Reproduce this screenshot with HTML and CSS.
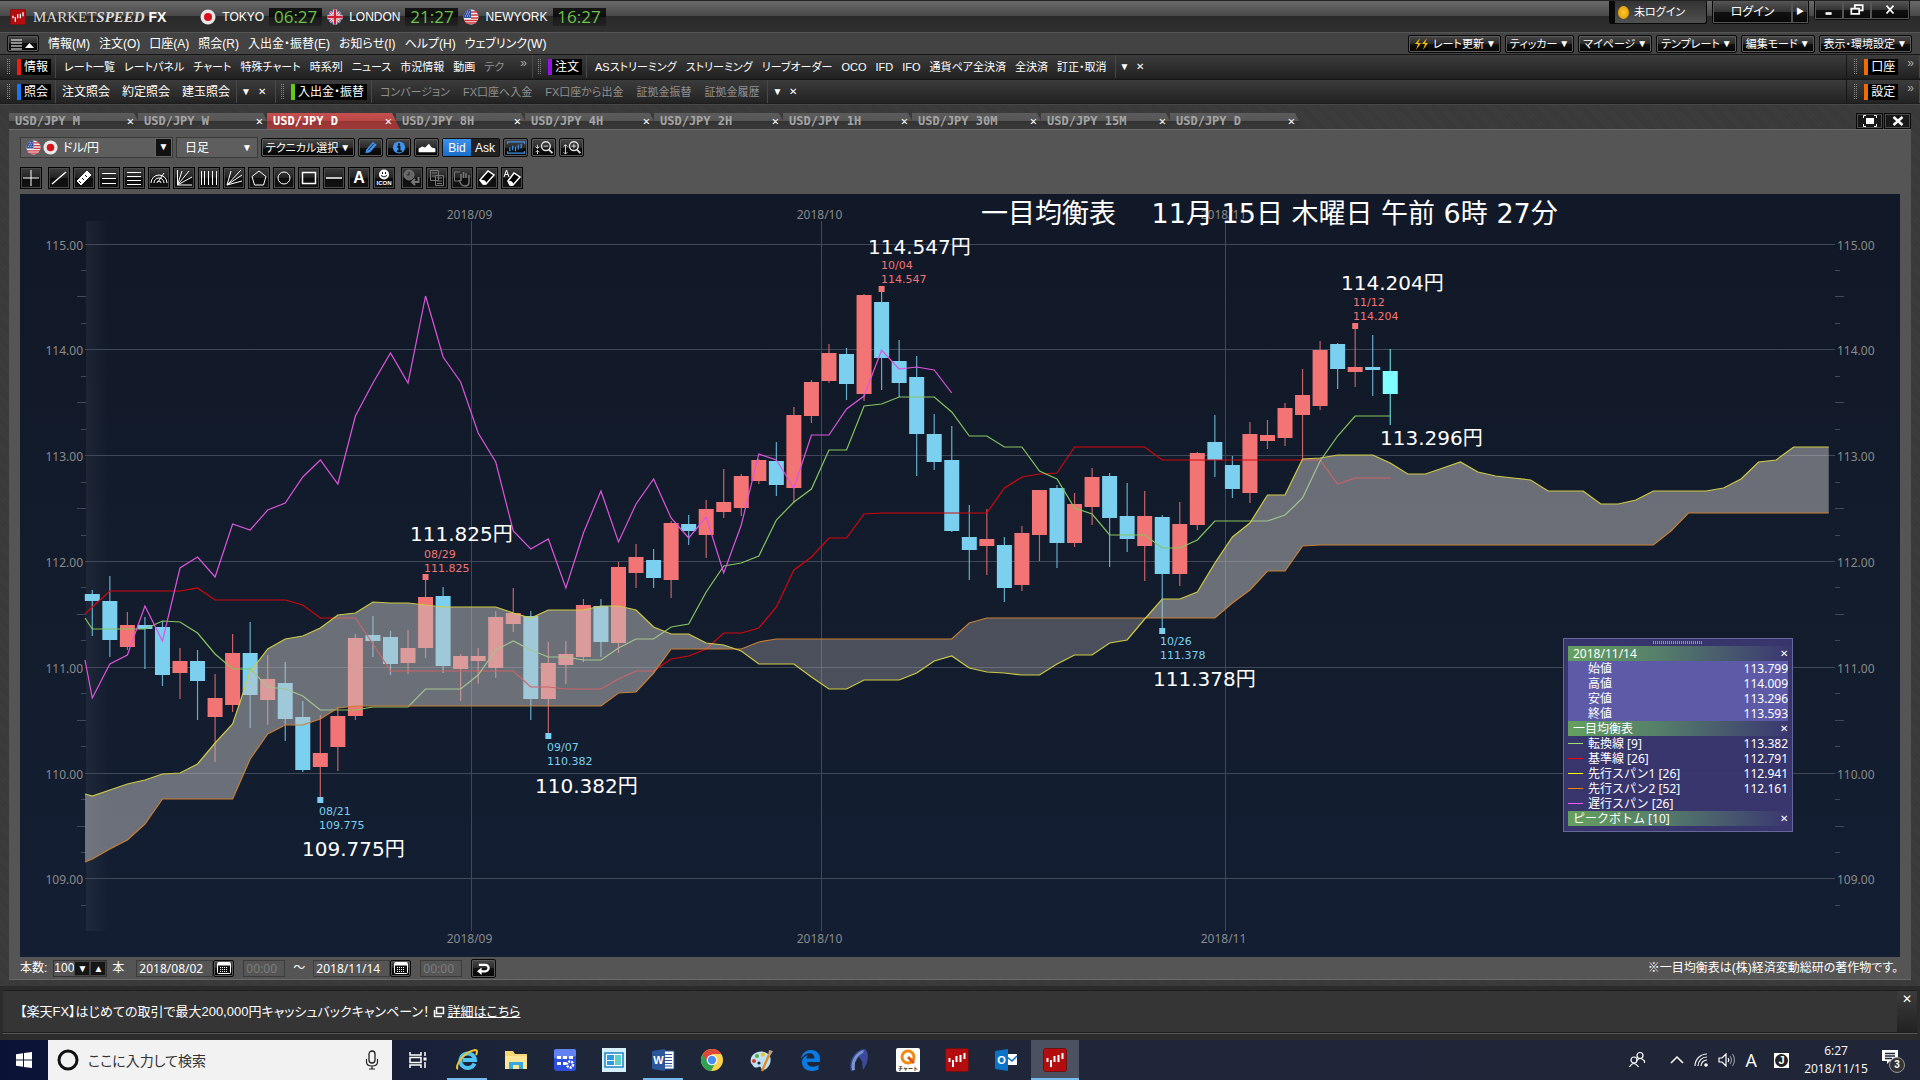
FILE: index.html
```html
<!DOCTYPE html>
<html lang="ja">
<head>
    <meta charset="UTF-8">
    <title>MARKETSPEED FX</title>
    <link rel="stylesheet" href="styles.css">
</head>
<body>
    <svg class="defs" aria-hidden="true">
        <symbol id="flag-jp" viewBox="0 0 16 16"><circle cx="8" cy="8" r="7.5" fill="#e8e8e8"/><circle cx="8" cy="8" r="4" fill="#d8101c"/></symbol>
        <symbol id="flag-uk" viewBox="0 0 16 16"><circle cx="8" cy="8" r="7.5" fill="#2b4394"/><path d="M3 3l10 10M13 3L3 13" stroke="#eee" stroke-width="2.6"/><path d="M3 3l10 10M13 3L3 13" stroke="#d33" stroke-width="1"/><path d="M8 .5v15M.5 8h15" stroke="#eee" stroke-width="4.4"/><path d="M8 .5v15M.5 8h15" stroke="#cf1f30" stroke-width="2.4"/></symbol>
        <symbol id="flag-us" viewBox="0 0 16 16"><circle cx="8" cy="8" r="7.5" fill="#eee"/><path d="M8 3h6M8 6h7.3M8 9h7.5M1 11.5h14M3 14h10" stroke="#d0353f" stroke-width="1.4"/><path d="M8 .5A7.5 7.5 0 0 0 .5 9H8z" fill="#33509c"/><path d="M3 5h4M4 3h3M2 7h5" stroke="#cdd6f0" stroke-dasharray="1 1"/></symbol>
        <symbol id="logo" viewBox="0 0 24 24"><rect x=".5" y=".5" width="23" height="23" rx="2" fill="#b30d10" stroke="#6d1212"/><path d="M4.5 10v4M8 12v7M11.500 8v6M15.500 7v7M19.500 5v6" stroke="#fff" stroke-width="2"/></symbol>
        <symbol id="cal" viewBox="0 0 14 12"><rect x=".5" y=".5" width="13" height="11" rx="1" fill="#111" stroke="#fff"/><path d="M1 2h12" stroke="#fff" stroke-width="3"/><path d="M3 5.500h8M3 7.500h8M3 9.500h8" stroke="#fff" stroke-dasharray="1 1"/></symbol>
    </svg>

    <header class="titlebar">
        <svg class="app-logo"><use href="#logo"/></svg>
        <h1 class="brand">MARKET<i>SPEED</i> <b>FX</b></h1>
        <div class="clock"><svg><use href="#flag-jp"/></svg>TOKYO <time>06:27</time></div>
        <div class="clock"><svg><use href="#flag-uk"/></svg>LONDON <time>21:27</time></div>
        <div class="clock"><svg><use href="#flag-us"/></svg>NEWYORK <time>16:27</time></div>
        <div class="title-right">
            <div class="login-state"><span class="lamp"></span>未ログイン</div>
            <div class="login"><button>ログイン</button><button class="arrow">▶</button></div>
            <div class="window-buttons">
                <button aria-label="最小化"><svg viewBox="0 0 16 16"><path d="M4 12h7" stroke="#fff" stroke-width="3"/></svg></button>
                <button aria-label="元に戻す"><svg viewBox="0 0 16 16"><path d="M5.500 6V2.500h9v6H11M1.500 6.500h9v6h-9z" fill="none" stroke="#fff" stroke-width="2"/></svg></button>
                <button class="close" aria-label="閉じる"><svg viewBox="0 0 16 16"><path d="M4 3l8 9M12 3l-8 9" stroke="#fff" stroke-width="2"/></svg></button>
            </div>
        </div>
    </header>

    <nav class="menubar">
        <button class="btn menu-toggle" aria-label="メニュー"><svg viewBox="0 0 26 12"><path d="M1 2h11M1 5h11M1 8h11M1 11h11" stroke="#fff"/><path d="M15 10l4.500-5 4.500 5z" fill="#fff"/></svg></button>
        <button>情報(M)</button>
        <button>注文(O)</button>
        <button>口座(A)</button>
        <button>照会(R)</button>
        <button>入出金・振替(E)</button>
        <button>お知らせ(I)</button>
        <button>ヘルプ(H)</button>
        <button>ウェブリンク(W)</button>
        <div class="menu-right">
            <button class="btn"><svg class="bolt" viewBox="0 0 16 14"><path d="M7 1L2 7h3l-2 6 5-7H5zM14 1L9 7h3l-2 6 5-7h-3z" fill="#f5b90b"/></svg>レート更新<span>▼</span></button>
            <button class="btn">ティッカー<span>▼</span></button>
            <button class="btn">マイページ<span>▼</span></button>
            <button class="btn">テンプレート<span>▼</span></button>
            <button class="btn">編集モード<span>▼</span></button>
            <button class="btn">表示・環境設定<span>▼</span></button>
        </div>
    </nav>

    <nav class="toolbar">
        <div class="group info">
            <span class="grip"></span><b class="tag red">情報</b>
            <div class="links">
                <button>レート一覧</button><button>レートパネル</button><button>チャート</button><button>特殊チャート</button><button>時系列</button><button>ニュース</button><button>市況情報</button><button>動画</button><button class="off">テク</button>
            </div>
            <span class="more">»</span>
        </div>
        <div class="group orders">
            <span class="grip"></span><b class="tag purple">注文</b>
            <div class="links">
                <button>ASストリーミング</button><button>ストリーミング</button><button>リーブオーダー</button><button>OCO</button><button>IFD</button><button>IFO</button><button>通貨ペア全決済</button><button>全決済</button><button>訂正・取消</button>
            </div>
            <div class="ends"><button aria-label="一覧">▼</button><button aria-label="閉じる">✕</button></div>
        </div>
        <div class="group last">
            <span class="grip"></span><b class="tag orange">口座</b><span class="more">»</span>
        </div>
    </nav>

    <nav class="toolbar">
        <div class="group inquiry">
            <span class="grip"></span><b class="tag blue">照会</b>
            <div class="links">
                <button>注文照会</button><button>約定照会</button><button>建玉照会</button>
            </div>
            <div class="ends"><button aria-label="一覧">▼</button><button aria-label="閉じる">✕</button></div>
        </div>
        <div class="group transfer">
            <span class="grip"></span><b class="tag green">入出金・振替</b>
            <div class="links">
                <button class="off">コンバージョン</button><button class="off">FX口座へ入金</button><button class="off">FX口座から出金</button><button class="off">証拠金振替</button><button class="off">証拠金履歴</button>
            </div>
            <div class="ends"><button aria-label="一覧">▼</button><button aria-label="閉じる">✕</button></div>
        </div>
        <div class="group last">
            <span class="grip"></span><b class="tag orange">設定</b><span class="more">»</span>
        </div>
    </nav>

    <main class="workspace">
        <div class="tabs">
            <div class="tab"><button>USD/JPY M</button><button class="x" aria-label="閉じる">✕</button></div>
            <div class="tab"><button>USD/JPY W</button><button class="x" aria-label="閉じる">✕</button></div>
            <div class="tab active"><button>USD/JPY D</button><button class="x" aria-label="閉じる">✕</button></div>
            <div class="tab"><button>USD/JPY 8H</button><button class="x" aria-label="閉じる">✕</button></div>
            <div class="tab"><button>USD/JPY 4H</button><button class="x" aria-label="閉じる">✕</button></div>
            <div class="tab"><button>USD/JPY 2H</button><button class="x" aria-label="閉じる">✕</button></div>
            <div class="tab"><button>USD/JPY 1H</button><button class="x" aria-label="閉じる">✕</button></div>
            <div class="tab"><button>USD/JPY 30M</button><button class="x" aria-label="閉じる">✕</button></div>
            <div class="tab"><button>USD/JPY 15M</button><button class="x" aria-label="閉じる">✕</button></div>
            <div class="tab"><button>USD/JPY D</button><button class="x" aria-label="閉じる">✕</button></div>
            <div class="tab-tools">
                <button aria-label="最大化"><svg viewBox="0 0 16 14"><path d="M1.500 4V1.500H4M12 1.500h2.500V4M14.500 10v2.500H12M4 12.500H1.500V10" fill="none" stroke="#fff"/><path d="M4 4h8v6H4z" fill="#fff"/></svg></button>
                <button aria-label="閉じる"><svg viewBox="0 0 16 14"><path d="M3.500 3l9 8M12.500 3l-9 8" stroke="#fff" stroke-width="2.4"/></svg></button>
            </div>
        </div>

        <section class="panel">
            <div class="controls">
                <div class="pair">
                    <svg><use href="#flag-us"/></svg><svg><use href="#flag-jp"/></svg>
                    <select aria-label="通貨ペア"><option>ドル/円</option></select>
                    <span class="drop">▼</span>
                </div>
                <div class="term"><select aria-label="足種"><option>日足</option></select><span>▼</span></div>
                <button class="btn technical">テクニカル選択<span>▼</span></button>
                <button class="btn icon" aria-label="描画"><svg viewBox="0 0 16 16"><path d="M2 14l1-4 7-8 4 3-7 8z" fill="#3f93ec"/><path d="M5 11l6-7" stroke="#123"/></svg></button>
                <button class="btn icon" aria-label="情報"><svg viewBox="0 0 16 16"><circle cx="8" cy="8" r="6.500" fill="#3f93ec"/><path d="M8 3.500v2M6 7h2.500v5M6 12h5" stroke="#111" stroke-width="2" fill="none"/></svg></button>
                <button class="btn icon" aria-label="エリア"><svg viewBox="0 0 20 16"><path d="M1 13V9l4-2 3 1 4-4 3 4 4 1v4z" fill="#fff"/></svg></button>
                <div class="bidask"><button class="on">Bid</button><button>Ask</button></div>
                <button class="btn icon" aria-label="全体表示"><svg viewBox="0 0 20 16"><path d="M1 4V2h18v2M1 12v2h18v-2M3.500 12V8M6.500 11V6M9.500 12V7M12.500 10V5M15.500 9V4" fill="none" stroke="#3f93ec" stroke-width="1.300"/></svg></button>
                <button class="btn icon" aria-label="縮小"><svg viewBox="0 0 20 16"><circle cx="12" cy="6.500" r="4.700" fill="none" stroke="#ddd" stroke-width="1.500"/><path d="M15 10l4 4" stroke="#ddd" stroke-width="2"/><path d="M9.500 6.500h5M3 5v4M3 11v4M1 7l2 2 2-2M1 13l2-2 2 2" fill="none" stroke="#ddd"/></svg></button>
                <button class="btn icon" aria-label="拡大"><svg viewBox="0 0 20 16"><circle cx="12" cy="6.500" r="4.700" fill="none" stroke="#ddd" stroke-width="1.500"/><path d="M15 10l4 4" stroke="#ddd" stroke-width="2"/><path d="M9.500 6.500h5M12 4v5M3 5v10M1 7l2-2 2 2M1 13l2 2 2-2" fill="none" stroke="#ddd"/></svg></button>
            </div>

            <div class="draw-tools">
                <button class="first" aria-label="十字"><svg viewBox="0 0 18 18"><path d="M9 1v16M1 9h16"/></svg></button>
                <button aria-label="線"><svg viewBox="0 0 18 18"><path d="M2 15L16 3" stroke-width="1.500"/></svg></button>
                <button aria-label="定規"><svg viewBox="0 0 18 18"><path d="M2 12L12 2l4 4L6 16z" fill="#fff"/><path d="M4 12l2 2M7 9l2 2M10 6l2 2" stroke="#111"/></svg></button>
                <button aria-label="三本線"><svg viewBox="0 0 18 18"><path d="M2 4.500h14M2 9.500h14M2 14.500h14"/></svg></button>
                <button aria-label="四本線"><svg viewBox="0 0 18 18"><path d="M2 3.500h14M2 7.500h14M2 11.500h14M2 15.500h14"/></svg></button>
                <button aria-label="アーク"><svg viewBox="0 0 18 18"><path d="M1 14a8 8 0 0 1 16 0M4 14a5 5 0 0 1 10 0M7 14a2 2 0 0 1 4 0M8 13l6-9"/></svg></button>
                <button aria-label="ファン"><svg viewBox="0 0 18 18"><path d="M2.500 1v15H17M2.500 16L7 2M2.500 16L14 2M2.500 16L17 8"/></svg></button>
                <button aria-label="縦線"><svg viewBox="0 0 18 18"><path d="M1.500 2v14M4.500 2v14M8.500 2v14M12.500 2v14M16.500 2v14"/></svg></button>
                <button aria-label="放射線"><svg viewBox="0 0 18 18"><path d="M2 16L16 1M2 16l4-14M2 16L17 6M2 16l15-4"/></svg></button>
                <button aria-label="五角形"><svg viewBox="0 0 18 18"><path d="M9 2l7 5.500L13.500 16h-9L2 7.500z"/></svg></button>
                <button aria-label="円"><svg viewBox="0 0 18 18"><circle cx="9" cy="9" r="6"/></svg></button>
                <button aria-label="四角形"><svg viewBox="0 0 18 18"><path d="M2.500 3.500h13v11h-13z" stroke-width="1.500"/></svg></button>
                <button aria-label="水平線"><svg viewBox="0 0 18 18"><path d="M1 9h16" stroke-width="1.500"/></svg></button>
                <button class="letter">A</button>
                <button class="face"><svg viewBox="0 0 12 11"><circle cx="6" cy="5.500" r="5" fill="#fff" stroke="none"/><path d="M4.500 3v2M7.500 3v2M3 6.500q3 3 6 0" stroke="#111"/></svg>ICON</button>
                <button class="off next" aria-label="履歴"><svg viewBox="0 0 18 18"><circle cx="6" cy="6" r="5" fill="#666"/><path d="M6 3v3H4" stroke="#222"/><path d="M15.500 8v5H9M12 10l-3 3 3 3" stroke-width="2"/></svg></button>
                <button class="off" aria-label="コピー"><svg viewBox="0 0 18 18"><path d="M2.500 1.500h8v10h-8zM7.500 6.500h8v10h-8zM4 4h5M4 7h3M9 9h5M9 12h5M9 14.500h5"/></svg></button>
                <button class="off" aria-label="手"><svg viewBox="0 0 18 18"><path d="M7 3H1.500v9H6"/><path d="M6 11l2 4q1 2 4 2 4 0 4-4V6M8 12V5M10.500 9V3M13 9V4" stroke-width="1.500"/></svg></button>
                <button aria-label="消しゴム"><svg viewBox="0 0 18 18"><path d="M2 11l8-9 6 4-8 9H5z" fill="#000" stroke-width="1.500"/><path d="M2 11l5 1 1 3H5z" fill="#fff"/></svg></button>
                <button aria-label="全消去"><svg viewBox="0 0 18 18"><path d="M5 12l6-8 6 4-7 8H7z" fill="#000" stroke-width="1.500"/><path d="M5 12l4 1 1 3H7z" fill="#fff"/><path d="M1 8l2.500-7L6 8M2 5.500h3"/></svg></button>
            </div>

            <div class="chart">
                <svg id="chart" viewBox="0 0 1880 763" role="img" aria-label="ドル/円 日足チャート"></svg>
                <div class="data-window">
                    <div class="dots"></div>
                    <table>
                        <tbody class="ohlc">
                            <tr class="head"><th colspan="3">2018/11/14<button aria-label="閉じる">✕</button></th></tr>
                            <tr><td></td><td>始値</td><td>113.799</td></tr>
                            <tr><td></td><td>高値</td><td>114.009</td></tr>
                            <tr><td></td><td>安値</td><td>113.296</td></tr>
                            <tr><td></td><td>終値</td><td>113.593</td></tr>
                        </tbody>
                        <tbody>
                            <tr class="head"><th colspan="3">一目均衡表<button aria-label="閉じる">✕</button></th></tr>
                            <tr class="tenkan"><td><i></i></td><td>転換線 [9]</td><td>113.382</td></tr>
                            <tr class="kijun"><td><i></i></td><td>基準線 [26]</td><td>112.791</td></tr>
                            <tr class="span1"><td><i></i></td><td>先行スパン1 [26]</td><td>112.941</td></tr>
                            <tr class="span2"><td><i></i></td><td>先行スパン2 [52]</td><td>112.161</td></tr>
                            <tr class="lagging"><td><i></i></td><td>遅行スパン [26]</td><td></td></tr>
                            <tr class="head"><th colspan="3">ピークボトム [10]<button aria-label="閉じる">✕</button></th></tr>
                        </tbody>
                    </table>
                </div>
            </div>

            <div class="range">
                <label for="count">本数:</label>
                <div class="count"><input id="count" value="100"><button aria-label="減らす">▼</button><button aria-label="増やす">▲</button></div>
                <span class="unit">本</span>
                <input class="date" aria-label="開始日" value="2018/08/02">
                <button class="btn cal" aria-label="カレンダー"><svg><use href="#cal"/></svg></button>
                <input class="hour" aria-label="開始時刻" value="00:00" disabled>
                <span class="tilde">～</span>
                <input class="date" aria-label="終了日" value="2018/11/14">
                <button class="btn cal" aria-label="カレンダー"><svg><use href="#cal"/></svg></button>
                <input class="hour" aria-label="終了時刻" value="00:00" disabled>
                <button class="btn back" aria-label="戻る"><svg viewBox="0 0 16 14"><path d="M3 3h7a3 3 0 0 1 0 7H5" fill="none" stroke="#fff" stroke-width="2.400"/><path d="M1 10l5-4v8z" fill="#fff"/></svg></button>
                <span class="note">※一目均衡表は(株)経済変動総研の著作物です。</span>
            </div>
        </section>
    </main>

    <footer class="news">
        <p>【楽天FX】はじめての取引で最大200,000円キャッシュバックキャンペーン！<svg viewBox="0 0 12 12"><path d="M3.500 1.500h7v6h-7zM1.500 4v6.500H9" fill="none" stroke="#fff" stroke-width="1.500"/></svg><a href="#">詳細はこちら</a></p>
        <button aria-label="閉じる">✕</button>
    </footer>

    <div class="taskbar">
        <button class="start" aria-label="スタート"><svg viewBox="0 0 16 16"><path d="M0 2.300L7 1.300v6.200H0zM8 1.100L16 0v7.500H8zM0 8.500h7v6.200l-7-1zM8 8.500h8V16l-8-1.100z" fill="#fff"/></svg></button>
        <label class="search">
            <svg viewBox="0 0 22 22"><circle cx="11" cy="11" r="9" fill="none" stroke="#111" stroke-width="3"/></svg>
            <input placeholder="ここに入力して検索" aria-label="検索">
            <svg viewBox="0 0 22 22"><rect x="8" y="2" width="6" height="12" rx="3" fill="none" stroke="#222" stroke-width="1.300"/><path d="M5.500 10v3q0 4 5.500 4t5.500-4v-3M11 17v3M8 20h6" fill="none" stroke="#222" stroke-width="1.200"/></svg>
        </label>
        <div class="apps">
            <button aria-label="タスクビュー"><svg viewBox="0 0 24 24"><path d="M4 4v3h11V4M4 20v-3h11v3M4 9.500h11v5H4zM19 4v4M19 14v6" fill="none" stroke="#fff" stroke-width="1.500"/><path d="M17.500 9.500h3v3h-3z" fill="#fff"/></svg></button>
            <button class="running" aria-label="Internet Explorer"><svg viewBox="0 0 24 24"><path d="M19.500 15.500A7.300 7.300 0 1 1 20 12H8" fill="none" stroke="#4fc3f4" stroke-width="4"/><path d="M3 21C-1 19 8 4 20 2c3 0 2 3 1 5" fill="none" stroke="#f4c430" stroke-width="2"/></svg></button>
            <button aria-label="エクスプローラー"><svg viewBox="0 0 24 24"><path d="M1 3h8l2 3h12v15H1z" fill="#f7d774"/><path d="M1 8h22v13H1z" fill="#fde597"/><path d="M5 21v-7h14v7h-4v-4H9v4z" fill="#35a8df"/></svg></button>
            <button aria-label="設定ツール"><svg viewBox="0 0 24 24"><rect x="1" y="1" width="22" height="22" rx="3" fill="#2c4fdc"/><path d="M1 3q0-2 2-2h18q2 0 2 2v5q-11 5-22 2z" fill="#6182ef"/><path d="M4 8h4v3H4zM10 8h4v3h-4zM16 8h4v3h-4zM4 14h4v3H4zM10 14h3v3h-3z" fill="#fff"/><circle cx="17" cy="16.500" r="3" fill="none" stroke="#fff" stroke-width="2.500" stroke-dasharray="2 1"/></svg></button>
            <button aria-label="ウィンドウ"><svg viewBox="0 0 24 24"><path d="M0 0h24v24H0z" fill="#d7f0ff"/><path d="M3 5h18v14H3z" fill="#fff" stroke="#1784c8" stroke-width="1.500"/><path d="M5 7h7v5H5zM5 13h7v4H5z" fill="#2a9ae2"/><path d="M13 7h6v10h-6z" fill="#5fd0c5"/></svg></button>
            <button class="running" aria-label="Word"><svg viewBox="0 0 24 24"><path d="M12 3h11v18H12z" fill="#fff" stroke="#2b579a"/><path d="M14 6.500h7M14 9.500h7M14 12.500h7M14 15.500h7M14 18h7" stroke="#2b579a"/><path d="M1 3l13-2v22L1 21z" fill="#2b579a"/><text x="7.500" y="16" font-size="11" font-weight="bold" text-anchor="middle" fill="#fff">W</text></svg></button>
            <button aria-label="Chrome"><svg viewBox="0 0 24 24"><circle cx="12" cy="12" r="11" fill="#fcd34b"/><path d="M2.500 6.500A11 11 0 0 0 11 23l5-9-4-2z" fill="#2da253"/><path d="M12 6h9.300a11 11 0 0 0-18.800.5L8 14z" fill="#e0473a"/><circle cx="12" cy="12" r="5.300" fill="#fff"/><circle cx="12" cy="12" r="4.200" fill="#4a8cf0"/></svg></button>
            <button aria-label="ペイント"><svg viewBox="0 0 24 24"><path d="M2 15C0 7 8 2 15 4c8 2 8 10 4 15-3 4-6 3-7 1-1-3-4 1-7-1z" fill="#bfe2f3"/><circle cx="5" cy="13" r="2" fill="#d43b2f"/><circle cx="8" cy="8" r="2" fill="#58aa3c"/><circle cx="14" cy="6.500" r="2" fill="#edc02c"/><circle cx="10" cy="15" r="1.600" fill="#1f2940"/><path d="M13 23l7-16" stroke="#e28b2a" stroke-width="2.400"/><path d="M19 8l1-6 4 1-3 5z" fill="#cba176"/></svg></button>
            <button aria-label="Edge"><svg viewBox="0 0 24 24"><path d="M3 11C4 4 9 2 13 2c6 0 9 4 9 9v3H9c0 5 7 6 11.500 3v4.500C10 26 3 20 4 13c.5-3 3-5 6-6-1 1-1.500 2-1.500 3.500h8C16.500 3 7 4 3 11z" fill="#0b7ae0"/></svg></button>
            <button aria-label="フェザー"><svg viewBox="0 0 24 24"><path d="M4 23C1 12 9 1 18 1c5 4 3 15-2 21l-1-8-3-5-4 6-1 8z" fill="#3d4a9c"/><path d="M5 22C3 12 10 3 17 2l-1 3C9 8 7 15 8 22z" fill="#7b95cf"/><path d="M12 9l4 6h-3v7h-2v-7H8z" fill="#1c2438"/></svg></button>
            <button aria-label="チャート"><svg viewBox="0 0 24 24"><rect width="24" height="24" rx="2" fill="#fff"/><circle cx="12" cy="9" r="6" fill="none" stroke="#f08a15" stroke-width="3"/><path d="M12 9l6 6" stroke="#d8591c" stroke-width="3"/><text x="12" y="22" font-size="5" font-weight="bold" text-anchor="middle" fill="#111">チャート</text></svg></button>
            <button aria-label="MARKETSPEED"><svg viewBox="0 0 24 24"><use href="#logo"/></svg></button>
            <button aria-label="Outlook"><svg viewBox="0 0 24 24"><path d="M12 6h11v11H12z" fill="#fff"/><path d="M13 9l5 4 5-5" fill="none" stroke="#0b72c6" stroke-width="1.600"/><path d="M1 3l13-2v22L1 21z" fill="#0b72c6"/><text x="7.500" y="16" font-size="11" font-weight="bold" text-anchor="middle" fill="#fff">O</text></svg></button>
            <button class="running current" aria-label="MARKETSPEED FX"><svg viewBox="0 0 24 24"><use href="#logo"/></svg></button>
        </div>
        <div class="tray">
            <svg class="people" viewBox="0 0 18 18"><g fill="none" stroke="#fff" stroke-width="1.200"><circle cx="12" cy="4.500" r="3"/><path d="M8.500 10q3.500-5 8 0v2"/><circle cx="6" cy="9" r="3"/><path d="M1.500 16q4-7 9 0"/></g></svg>
            <svg viewBox="0 0 14 14"><path d="M1 10l6-6 6 6" fill="none" stroke="#fff" stroke-width="1.500"/></svg>
            <svg viewBox="0 0 14 14"><g fill="none" stroke="#eee" stroke-width="1.200"><path d="M1 13A12 12 0 0 1 13 1M4 13a9 9 0 0 1 9-9M7 13a6 6 0 0 1 6-6"/></g><circle cx="12" cy="12" r="1.800" fill="#fff"/></svg>
            <svg class="sound" viewBox="0 0 18 14"><path d="M1 5h3l4-4v12L4 9H1zM10 5q1.500 2 0 4" fill="none" stroke="#fff" stroke-width="1.200"/><path d="M12 3q3 4 0 8M14.500 1q4 6 0 12" fill="none" stroke="#8a8f9c" stroke-width="1.200"/></svg>
            <span class="ime">A</span>
            <span class="ime-j"><b>J</b></span>
            <time>6:27<br>2018/11/15</time>
            <div class="notice"><svg viewBox="0 0 18 18"><path d="M1 2h16v11H9l-3 3v-3H1z" fill="#fff"/><path d="M4 5.500h10M4 8h10M4 10.500h7" stroke="#20263a" stroke-width="1.300"/></svg><b>3</b></div>
        </div>
    </div>

    <script src="chart.js"></script>
</body>
</html>
```
FILE: styles.css
```css
* {
    box-sizing: border-box;
}

body {
    margin: 0;
    min-height: 100vh;
    display: flex;
    flex-direction: column;
    background: #2b2b2b;
    color: #fff;
    font-family: "Liberation Sans", "Noto Sans CJK JP", sans-serif;
    font-size: 12px;
    line-height: 16px;
    font-feature-settings: "palt";
}

button,
input,
select {
    font: inherit;
    font-feature-settings: inherit;
    color: inherit;
    background: none;
    border: 0;
    padding: 0;
    margin: 0;
    white-space: nowrap;
}

p {
    margin: 0;
}

.defs {
    position: absolute;
    width: 0;
    height: 0;
}

.btn {
    display: flex;
    align-items: center;
    justify-content: center;
    background: linear-gradient(#484848, #2a2a2a 50%, #111 50%, #050505);
    border: 1px solid #0a0a0a;
    border-radius: 2px;
    box-shadow: inset 0 0 0 1px #5a5a5a;
}

/* title bar */
.titlebar {
    display: flex;
    height: 32px;
    padding-left: 10px;
    align-items: center;
    border-top: 1px solid #222;
    background: linear-gradient(#6a6a6a, #474747 50%, #2a2a2a 50%, #303030);
}

.app-logo {
    width: 16px;
    height: 16px;
}

.brand {
    margin: 0 34px 0 7px;
    font: 15px/20px "Liberation Serif", serif;
    color: #ddd;
}

.brand i {
    font-weight: bold;
}

.brand b {
    font-family: "Liberation Sans", sans-serif;
    font-size: 14px;
    color: #fff;
}

.clock {
    display: flex;
    align-items: center;
    margin-right: 5px;
}

.clock svg {
    width: 16px;
    height: 16px;
    margin-right: 6px;
}

.clock time {
    width: 53px;
    height: 18px;
    margin-left: 5px;
    background: linear-gradient(#161616, #0c0c0c 50%, #1a1a1a 50%, #222);
    color: #6cc24a;
    font: 17px/18px "Open Sans", sans-serif;
    text-align: center;
}

.title-right {
    display: flex;
    margin-left: auto;
    align-self: flex-start;
    gap: 5px;
    padding-right: 10px;
}

.login-state,
.login,
.window-buttons {
    display: flex;
    height: 23px;
    border: 1px solid #080808;
    border-top: 0;
    border-radius: 0 0 3px 3px;
}

.login-state {
    width: 98px;
    align-items: center;
    gap: 5px;
    padding-left: 3px;
    border-left-width: 6px;
    background: linear-gradient(#333, #505050);
    font-size: 11px;
}

.lamp {
    width: 11px;
    height: 13px;
    border-radius: 50%;
    background: radial-gradient(#ffc928, #d79200);
}

.login button,
.window-buttons button {
    background: linear-gradient(#555, #333 50%, #111 50%, #080808);
    box-shadow: inset 0 0 0 1px #555;
}

.login button {
    width: 79px;
}

.login .arrow {
    width: 16px;
    font-size: 8px;
}

.window-buttons {
    height: 19px;
}

.window-buttons button {
    width: 28px;
}

.window-buttons .close {
    width: 38px;
}

.window-buttons svg {
    display: block;
    margin: auto;
    width: 16px;
    height: 14px;
}

/* menu */
.menubar {
    display: flex;
    align-items: center;
    gap: 9px;
    height: 22px;
    padding: 0 8px 0 7px;
    border-top: 1px solid #555;
    background: #434343;
}

.menu-toggle {
    width: 32px;
    height: 17px;
}

.menu-toggle svg {
    width: 26px;
    height: 12px;
}

.menu-right {
    display: flex;
    gap: 4px;
    margin-left: auto;
}

.menu-right .btn {
    height: 18px;
    padding: 0 4px;
    font-size: 11px;
}

.menu-right span,
.technical span {
    margin-left: 2px;
    font-size: 10px;
}

.bolt {
    width: 16px;
    height: 14px;
    margin-right: 4px;
}

/* tool bars */
.toolbar {
    display: flex;
    height: 25px;
    border-top: 1px solid #161616;
    border-bottom: 1px solid #1d1d1d;
    background: linear-gradient(#3c3c3c, #222);
}

.group {
    display: flex;
    align-items: center;
    padding-left: 6px;
    border-right: 1px solid #484848;
}

.group.info {
    width: 533px;
}

.group.inquiry {
    width: 276px;
}

.group.orders,
.group.transfer {
    border: 0;
    padding-left: 4px;
}

.group.last {
    margin-left: auto;
    border-left: 1px solid #151515;
}

.grip {
    flex: none;
    width: 5px;
    height: 15px;
    margin-right: 6px;
    background: conic-gradient(#858585 25%, transparent 0) 0 0 / 2px 2px;
}

.tag {
    padding: 0 3px;
    margin-right: 4px;
    border-left: 4px solid;
    background: #000;
    font-weight: normal;
    white-space: nowrap;
}

.tag.red { border-color: #f21b0c; }
.tag.purple { border-color: #9212e8; }
.tag.blue { border-color: #1478f0; }
.tag.green { border-color: #62cc10; }
.tag.orange { border-color: #f06a05; }

.links {
    display: flex;
    align-self: stretch;
    align-items: center;
    gap: 9px;
    padding: 0 8px;
    border-left: 1px solid #484848;
    font-size: 11px;
}

.info .links {
    padding-right: 0;
}

.inquiry .links {
    gap: 12px;
    padding: 0 6px;
    font-size: 12px;
}

.transfer .links {
    gap: 13px;
}

.off {
    color: #909090;
}

.more {
    align-self: flex-start;
    margin-left: auto;
    padding: 0 5px;
    color: #aaa;
}

.ends {
    display: flex;
    align-self: stretch;
    align-items: center;
    gap: 7px;
    padding: 0 4px;
    border-left: 1px solid #484848;
    font-size: 10px;
}

/* chart window */
.workspace {
    padding: 8px 9px 6px;
    border-top: 1px solid #484848;
    background: repeating-linear-gradient(45deg, #383838 0 1px, #3d3d3d 1px 2px);
}

.tabs {
    display: flex;
    height: 16px;
}

.tab {
    display: flex;
    align-items: center;
    width: 133px;
    margin-right: -4px;
    padding: 0 8px 0 6px;
    background: linear-gradient(#5c5c5c, #555 50%, #333 50%, #3a3a3a);
    clip-path: polygon(0 0, 94% 0, 100% 100%, 0 100%);
    color: #a5a5a5;
    font: bold 12px/16px "DejaVu Sans Mono", monospace;
}

.tab .x {
    margin-left: auto;
    color: #fff;
    font-size: 12px;
}

.tab.active {
    z-index: 1;
    background: linear-gradient(#c65050, #b94646 50%, #963434 50%, #a03a3a);
    color: #fff;
}

.tab-tools {
    display: flex;
    gap: 1px;
    margin-left: auto;
}

.tab-tools button {
    display: flex;
    align-items: center;
    justify-content: center;
    width: 27px;
    background: #181818;
    border: 1px solid #0a0a0a;
    box-shadow: inset 0 0 0 1px #4a4a4a;
}

.tab-tools svg {
    width: 16px;
    height: 14px;
}

.panel {
    padding: 7px 11px 0 11px;
    border-top: 1px solid #6a6a6a;
    border-bottom: 1px solid #6a6a6a;
    background: #555;
}

.controls {
    display: flex;
    align-items: center;
    gap: 3px;
    height: 21px;
    font-size: 11px;
}

.controls .btn,
.bidask {
    height: 19px;
}

.pair,
.term {
    position: relative;
    display: flex;
    align-items: center;
    height: 21px;
    border: 1px solid #3a3a3a;
    background: #5e5e5e;
}

.pair {
    width: 153px;
    padding-left: 5px;
    gap: 2px;
}

.pair svg {
    width: 15px;
    height: 15px;
}

select {
    flex: 1;
    appearance: none;
    outline: 0;
}

.pair select {
    padding-left: 3px;
    font-size: 12px;
}

.drop {
    width: 17px;
    height: 19px;
    background: #111;
    border: 1px solid #666;
    font-size: 10px;
    text-align: center;
}

.term {
    width: 82px;
    padding: 0 5px 0 8px;
    font-size: 12px;
}

.term span {
    font-size: 10px;
}

.technical {
    width: 94px;
}

.icon {
    width: 25px;
}

.icon svg {
    height: 15px;
    width: 20px;
}

.bidask {
    display: flex;
    border: 1px solid #111;
    border-radius: 2px;
    background: #222;
    font-size: 12px;
}

.bidask button {
    width: 28px;
}

.bidask .on {
    background: linear-gradient(#3b91ea, #1b6dcb);
}

.draw-tools {
    display: flex;
    gap: 3px;
    margin: 9px 0 5px;
}

.draw-tools button {
    display: flex;
    flex-direction: column;
    align-items: center;
    justify-content: center;
    width: 22px;
    height: 22px;
    background: linear-gradient(#3e3e3e, #222 50%, #0c0c0c 50%, #141414);
    border: 1px solid #050505;
    box-shadow: inset 0 0 0 1px #4a4a4a;
}

.draw-tools svg {
    width: 18px;
    height: 18px;
    fill: none;
    stroke: #fff;
    stroke-width: 1;
}

.draw-tools .first {
    margin-right: 3px;
}

.draw-tools .next {
    margin-left: 3px;
}

.draw-tools .off svg {
    stroke: #777;
}

.draw-tools .letter {
    font-size: 16px;
    font-weight: bold;
}

.draw-tools .face {
    font-size: 6px;
    line-height: 7px;
    font-weight: bold;
}

.draw-tools .face svg {
    width: 12px;
    height: 11px;
}

.chart {
    position: relative;
    background: linear-gradient(#111827, #121c2c 50%, #131e33);
}

.chart > svg {
    display: block;
    width: 100%;
    height: auto;
}

#chart text {
    font-family: "DejaVu Sans", "Noto Sans CJK JP", sans-serif;
    font-feature-settings: normal;
    white-space: pre;
}

#chart .axis {
    font-family: "Noto Sans", sans-serif;
    font-size: 12px;
    fill: #8a8a8a;
}

#chart .title {
    font-size: 27px;
    fill: #fff;
}

#chart .note {
    font-size: 20px;
    fill: #fff;
}

#chart .peak {
    font-size: 11px;
    fill: #f27474;
}

#chart .bottom {
    font-size: 11px;
    fill: #7bd0f0;
}

.data-window {
    position: absolute;
    top: 58.2%;
    right: 107px;
    width: 230px;
    padding: 0 4px 5px 4px;
    border: 1px solid #67689a;
    background: rgba(59, 55, 113, 0.95);
    font: 12px/15px "Noto Sans", "Noto Sans CJK JP", sans-serif;
}

.dots {
    width: 50px;
    height: 3px;
    margin: 2px auto 2px;
    background: repeating-linear-gradient(90deg, #8c8cb4 0 1px, transparent 1px 2px);
}

.data-window table {
    width: 100%;
    border-collapse: collapse;
}

.data-window td {
    height: 15px;
    padding: 0;
    line-height: 15px;
    white-space: nowrap;
}

.data-window td:first-child {
    width: 20px;
}

.data-window td:last-child {
    text-align: right;
}

.data-window th {
    height: 15px;
    padding: 0 0 0 5px;
    background: linear-gradient(90deg, #64a05e, #56806a 40%, #3b3771);
    font-weight: normal;
    text-align: left;
    line-height: 15px;
}

.data-window th button {
    float: right;
    font-size: 10px;
}

.ohlc td {
    background: #5d5ba8;
}

.data-window i {
    display: block;
    width: 15px;
    height: 1px;
}

.tenkan i { background: #a0e070; }
.kijun i { background: #f00; }
.span1 i { background: #ff0; }
.span2 i { background: #ff7f00; }
.lagging i { background: #f5f; }

/* range row below the chart */
.range {
    display: flex;
    align-items: center;
    height: 22px;
}

.count {
    display: flex;
    width: 54px;
    height: 17px;
    margin: 0 5px 0 6px;
    border: 1px solid #333;
}

.count input {
    width: 20px;
    flex: 1;
}

.count button {
    width: 16px;
    background: #151515;
    border: 1px solid #444;
    font-size: 10px;
    line-height: 13px;
}

.unit {
    width: 24px;
}

.date,
.hour {
    height: 17px;
    border: 1px solid #3c3c3c;
    font: 12px/15px "Noto Sans", sans-serif;
}

.date {
    width: 77px;
    padding: 0 2px;
}

.hour {
    width: 42px;
    margin-left: 9px;
    padding: 0 2px;
    color: #7c7c7c;
}

.cal {
    width: 21px;
    height: 17px;
}

.cal svg {
    width: 14px;
    height: 12px;
}

.tilde {
    width: 28px;
    text-align: center;
}

.back {
    width: 25px;
    height: 19px;
    margin-left: 9px;
}

.back svg {
    width: 15px;
    height: 13px;
}

.note {
    margin-left: auto;
    padding-right: 2px;
}

/* news ticker */
.news {
    display: flex;
    flex: 1;
    margin: 4px 3px 7px;
    border: solid #1e1e1e;
    border-width: 1px 0;
    background: #353535;
    box-shadow: 0 1px 0 #555;
}

.news p {
    display: flex;
    flex: 1;
    align-items: center;
    padding-left: 17px;
    font-size: 13px;
}

.news svg {
    width: 12px;
    height: 12px;
    margin: 0 2px 0 4px;
}

.news a {
    color: #fff;
}

.news button {
    width: 20px;
    align-self: stretch;
    background: linear-gradient(#3c3c3c, #222);
    display: flex;
    justify-content: center;
    font-size: 12px;
}

/* task bar */
.taskbar {
    display: flex;
    height: 40px;
    background: linear-gradient(90deg, #0a1336, #1e2639 30%, #202638);
    font-feature-settings: normal;
}

.start {
    width: 48px;
}

.start svg {
    display: block;
    width: 16px;
    height: 16px;
    margin: auto;
}

.search {
    display: flex;
    align-items: center;
    width: 344px;
    padding: 0 9px;
    background: #f2f2f2;
}

.search svg {
    width: 22px;
    height: 22px;
}

.search input {
    flex: 1;
    padding-left: 9px;
    font-family: "Noto Sans CJK JP", sans-serif;
    font-size: 14px;
    font-feature-settings: "palt";
}

.search input::placeholder {
    color: #333;
    opacity: 1;
}

.apps {
    display: flex;
    gap: 1px;
    padding-left: 2px;
}

.apps button {
    width: 48px;
    padding-top: 2px;
    border-bottom: 2px solid transparent;
}

.apps .running {
    background: linear-gradient(#76b9ed, #76b9ed) 50% 38px / 40px 2px no-repeat border-box;
}

.apps .current {
    background: #4b5160;
    border-color: #76b9ed;
}

.apps svg {
    display: block;
    width: 24px;
    height: 24px;
    margin: auto;
}

.tray {
    display: flex;
    align-items: center;
    margin-left: auto;
    padding-right: 15px;
    gap: 10px;
}

.tray svg {
    width: 14px;
    height: 14px;
}

.tray .people {
    width: 18px;
    height: 18px;
    margin-right: 14px;
}

.tray .sound {
    width: 18px;
}

.ime {
    font: 18px/20px "Open Sans", sans-serif;
}

.ime-j {
    width: 15px;
    height: 15px;
    margin: 0 4px 0 7px;
    background: #fff;
    text-align: center;
    line-height: 15px;
}

.ime-j b {
    display: block;
    width: 13px;
    height: 13px;
    margin: 1px;
    border-radius: 50%;
    background: #222;
    font-size: 11px;
    line-height: 13px;
}

.tray time {
    width: 66px;
    font: 12px/18px "Open Sans", sans-serif;
    text-align: center;
}

.notice {
    position: relative;
    width: 24px;
    height: 24px;
    margin-left: 2px;
}

.notice svg {
    width: 18px;
    height: 18px;
}

.notice b {
    position: absolute;
    left: 8px;
    top: 9px;
    width: 16px;
    height: 16px;
    border: 1px solid #999;
    border-radius: 50%;
    background: #333;
    font-size: 10px;
    line-height: 14px;
    text-align: center;
}
```
FILE: chart.js
```js
// one entry per day: high, body top, body bottom, low, 1 = up / 0 = down
const candles = [
    [396, 400, 407, 442, 0], [382, 407, 446, 463, 0], [418, 431, 453, 456, 1], [423, 431, 435, 475, 0], [427, 433, 481, 492, 0],
    [454, 467, 479, 505, 1], [456, 467, 487, 526, 0], [480, 504, 523, 568, 1], [440, 459, 511, 518, 1], [428, 459, 501, 534, 0],
    [461, 485, 506, 531, 1], [468, 489, 525, 547, 0], [507, 523, 576, 578, 0], [521, 559, 573, 603, 1], [513, 522, 553, 577, 1],
    [440, 444, 522, 526, 1], [422, 441, 447, 463, 0], [437, 443, 470, 481, 0], [436, 454, 469, 480, 1], [386, 403, 454, 464, 1],
    [393, 402, 472, 479, 0], [460, 462, 475, 507, 1], [454, 462, 467, 490, 1], [417, 423, 474, 484, 1], [394, 419, 430, 438, 1],
    [417, 422, 505, 526, 0], [448, 469, 505, 539, 1], [447, 460, 471, 490, 1], [405, 411, 463, 468, 1], [405, 412, 448, 463, 0],
    [368, 373, 449, 459, 1], [350, 363, 379, 394, 1], [355, 366, 384, 394, 0], [327, 329, 386, 404, 1], [321, 330, 337, 351, 0],
    [306, 315, 341, 364, 1], [275, 308, 318, 324, 1], [280, 282, 314, 322, 1], [265, 266, 287, 290, 1], [248, 267, 291, 302, 0],
    [213, 221, 294, 309, 1], [186, 188, 222, 229, 1], [150, 159, 187, 189, 1], [154, 160, 190, 206, 0], [100, 101, 200, 207, 1],
    [96, 108, 164, 196, 0], [146, 167, 189, 203, 0], [162, 183, 240, 282, 0], [220, 240, 268, 276, 0], [232, 266, 337, 338, 0],
    [311, 343, 356, 386, 0], [315, 345, 352, 381, 1], [343, 351, 394, 408, 0], [332, 339, 391, 397, 1], [296, 296, 341, 367, 1],
    [291, 294, 349, 374, 0], [299, 310, 349, 353, 1], [274, 283, 313, 331, 1], [279, 282, 324, 373, 0], [289, 322, 345, 358, 0],
    [297, 322, 352, 387, 1], [321, 323, 380, 434, 0], [308, 330, 380, 392, 1], [258, 259, 331, 336, 1], [221, 248, 266, 283, 0],
    [262, 271, 295, 304, 0], [228, 240, 299, 309, 1], [226, 241, 247, 255, 1], [209, 214, 244, 252, 1], [175, 201, 221, 266, 1],
    [147, 156, 212, 216, 1], [149, 150, 175, 195, 0], [134, 173, 178, 193, 1], [141, 173, 176, 202, 0], [155, 177, 200, 231, 0]
];

const tenkan = [435, 435, 435, 435, 427, 428, 439, 460, 475, 475, 493, 495, 502, 516, 516, 516, 513, 513, 513, 495, 495, 495, 481, 456, 447,
    456, 463, 463, 466, 466, 454, 445, 445, 433, 430, 398, 372, 369, 362, 326, 308, 295, 256, 256, 212, 210, 203, 203, 203, 218,
    242, 242, 253, 253, 277, 285, 314, 320, 341, 341, 341, 354, 354, 346, 327, 327, 327, 327, 321, 304, 267, 242, 222, 222, 222];

const kijun = [413, 397, 397, 397, 397, 397, 394, 406, 406, 406, 406, 406, 411, 424, 424, 424, 450, 477, 477, 477, 477, 477, 477, 477, 477,
    493, 493, 495, 495, 495, 485, 477, 477, 465, 462, 455, 439, 439, 434, 413, 376, 363, 344, 344, 320, 319, 319, 319, 319, 319,
    319, 319, 294, 283, 280, 279, 253, 253, 253, 253, 253, 266, 266, 266, 266, 266, 266, 266, 266, 266, 266, 290, 284, 284, 284];

const spanA = [602, 596, 590, 586, 580, 579, 570, 549, 530, 478, 455, 445, 442, 434, 421, 419, 408, 409, 409, 411, 413, 413, 413, 413, 419,
    424, 416, 416, 416, 412, 412, 416, 433, 440, 440, 449, 451, 457, 470, 470, 470, 483, 495, 495, 486, 486, 486, 479, 467, 462,
    474, 478, 479, 481, 481, 470, 461, 461, 449, 446, 425, 405, 405, 398, 369, 343, 329, 301, 301, 265, 264, 261, 261, 261, 269,
    280, 280, 274, 268, 278, 282, 284, 286, 297, 297, 297, 310, 310, 306, 297, 297, 297, 297, 294, 285, 268, 266, 253, 253, 253];

const spanB = [665, 655, 646, 630, 605, 605, 605, 605, 605, 565, 540, 531, 531, 525, 514, 512, 512, 512, 512, 512, 512, 512, 512, 512, 512,
    512, 512, 512, 512, 512, 499, 498, 479, 455, 455, 455, 455, 455, 448, 445, 445, 445, 445, 445, 445, 445, 445, 445, 445, 445,
    429, 424, 424, 424, 424, 424, 424, 424, 424, 424, 424, 424, 424, 424, 424, 409, 396, 377, 377, 352, 351, 351, 351, 351, 351,
    351, 351, 351, 351, 351, 351, 351, 351, 351, 351, 351, 351, 351, 351, 351, 337, 319, 319, 319, 319, 319, 319, 319, 319, 319];

const lagging = [504, 470, 461, 412, 447, 374, 363, 383, 330, 336, 316, 309, 283, 266, 290, 222, 189, 159, 189, 102, 163, 188, 239, 268, 337,
    355, 345, 394, 339, 297, 348, 310, 285, 324, 344, 323, 379, 331, 260, 266, 294, 241, 241, 215, 202, 156, 175, 173, 176, 199];

const UP = '#f27474';
const DOWN = '#7bd0f0';
const LEFT = 65;

const x = i => 72.3 + 17.54 * i;
const priceY = p => 50 + (115 - p) * 105.83;

function points(data, first) {
    return [[LEFT, first]].concat(data.map((y, i) => [x(i), y]));
}

function line(data, first, color) {
    return `<polyline points="${points(data, first).join(' ')}" fill="none" stroke="${color}" stroke-width="1.2"/>`;
}

function text(cls, tx, ty, str, anchor = 'start') {
    return `<text class="${cls}" x="${tx}" y="${ty}" text-anchor="${anchor}">${str}</text>`;
}

// cloud between the two spans, cut at the places where they cross
function cloud(from, to, cross0, cross1, color) {
    const top = points(spanA, 600).slice(from, to);
    const bottom = points(spanB, 668).slice(from, to).reverse();
    const all = [...cross0, ...top, ...cross1, ...bottom];
    return `<polygon points="${all.join(' ')}" fill="${color}"/>`;
}

let svg = `<defs><linearGradient id="fade"><stop stop-color="#fff" stop-opacity="0.05"/><stop offset="1" stop-color="#fff" stop-opacity="0"/></linearGradient></defs>
    <rect x="66" y="27" width="24" height="710" fill="url(#fade)"/>`;

for (let p = 115; p > 108.5; p -= 0.25) {
    const y = Math.floor(priceY(p)) + 0.5;
    if (p % 1 === 0) {
        svg += `<path d="M65 ${y}H1815" stroke="#414857"/>`;
        svg += text('axis', 63, y + 5, p.toFixed(2), 'end');
        svg += text('axis', 1817, y + 5, p.toFixed(2));
    } else {
        const w = p % 0.5 === 0 ? 9 : 5;
        svg += `<path d="M${66 - w} ${y}h${w}M1815 ${y}h${w}" stroke="#414857"/>`;
    }
}

for (const [gx, month] of [[451.5, '2018/09'], [801.5, '2018/10'], [1205.5, '2018/11']]) {
    svg += `<path d="M${gx} 27V737" stroke="#414857"/>`;
    svg += text('axis', gx - 2, 25, month, 'middle');
    svg += text('axis', gx - 2, 749, month, 'middle');
}

candles.forEach(([high, top, bottom, low, up], i) => {
    const color = i === 74 ? '#7fffff' : up ? UP : DOWN;
    svg += `<path d="M${x(i)} ${high}V${low}" stroke="${color}" stroke-width="1.2" stroke-opacity="0.8"/>`;
    svg += `<rect x="${x(i) - 7.5}" y="${top}" width="15" height="${bottom - top}" fill="${color}"/>`;
});

svg += line(kijun, 420, '#d4060c');
svg += line(tenkan, 424, '#86c55f');

const c1 = [[x(36.67), 455]];
const c2 = [[x(60.05), 424]];
svg += cloud(0, 38, [], c1, 'rgba(196,194,194,0.5)');
svg += cloud(38, 62, c1, c2, 'rgba(190,185,185,0.33)');
svg += cloud(62, 101, c2, [], 'rgba(196,194,194,0.5)');

svg += line(spanB, 668, '#c97f35');
svg += line(spanA, 600, '#cfca45');
svg += line(lagging, 466, '#dd55dd');

// day index, marker y, date, price, text x, text y, big label x, big label y, peak or bottom
const marks = [
    [13, 606, '08/21', '109.775', 299, 621, 282, 662, 'bottom'],
    [19, 383, '08/29', '111.825', 404, 364, 390, 347, 'peak'],
    [26, 542, '09/07', '110.382', 527, 557, 515, 599, 'bottom'],
    [45, 95, '10/04', '114.547', 861, 75, 848, 60, 'peak'],
    [61, 437, '10/26', '111.378', 1140, 451, 1133, 492, 'bottom'],
    [72, 132, '11/12', '114.204', 1333, 112, 1321, 96, 'peak']
];

for (const [i, my, date, price, tx, ty, bx, by, cls] of marks) {
    svg += `<rect x="${x(i) - 3}" y="${my - 3}" width="6" height="6" fill="${cls === 'peak' ? UP : DOWN}"/>`;
    svg += text(cls, tx, ty, date) + text(cls, tx, ty + 14, price);
    svg += text('note', bx, by, price + '円');
}

svg += text('note', 1360, 251, '113.296円');
svg += text('title', 961, 29, '一目均衡表　 11月 15日 木曜日 午前 6時 27分');

document.getElementById('chart').innerHTML = svg;
```
